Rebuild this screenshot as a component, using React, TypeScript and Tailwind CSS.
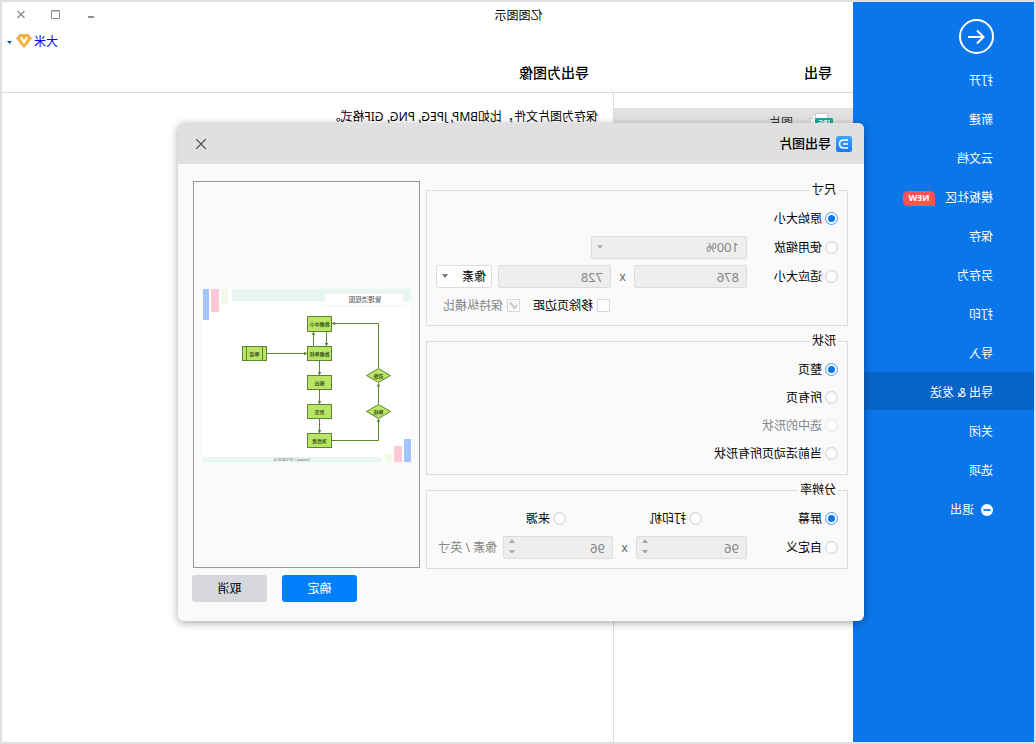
import type { ReactNode } from "react"
import { clsx } from "clsx"

interface MenuItem {
  label: string
  active?: boolean
  badge?: string
  exit?: boolean
}

const menu: MenuItem[] = [
  { label: "打开" },
  { label: "新建" },
  { label: "云文档" },
  { label: "模板社区", badge: "NEW" },
  { label: "保存" },
  { label: "另存为" },
  { label: "打印" },
  { label: "导入" },
  { label: "导出 & 发送", active: true },
  { label: "关闭" },
  { label: "选项" },
  { label: "退出", exit: true },
]

function Sidebar() {
  return (
    <nav className="w-[181px] shrink-0 bg-[#0a76ea] pt-[17px] text-white">
      <button type="button" aria-label="返回" className="ml-10 block size-[35px]">
        <svg viewBox="0 0 35 35" className="size-full" fill="none" stroke="currentColor" strokeWidth="2">
          <circle cx="17.5" cy="17.5" r="16.5" />
          <path d="M26 18H11M17 11.5L10.500 18l6.500 6.500" />
        </svg>
      </button>
      <ul className="mt-[6px] flex flex-col gap-px">
        {menu.map((item) => (
          <li key={item.label}>
            <a href="#" className={clsx("flex h-[38px] items-center pt-1 pl-[41px]", item.active && "bg-[#0865c8]")}>
              {item.exit && (
                <svg viewBox="0 0 12 12" className="mr-[7px] mb-px size-3">
                  <circle cx="6" cy="6" r="6" fill="#fff" />
                  <path d="M2.500 6h7" stroke="#0a76ea" strokeWidth="1.800" />
                </svg>
              )}
              <span>{item.label}</span>
              {item.badge && (
                <span className="ml-[10px] flex h-[15px] w-8 items-center justify-center rounded-[5px] rounded-bl-none bg-[#ff5254] font-['Open_Sans',sans-serif] text-[9px] font-bold">
                  {item.badge}
                </span>
              )}
            </a>
          </li>
        ))}
      </ul>
    </nav>
  )
}

function TitleBar() {
  return (
    <>
      <div className="relative flex h-7 items-center justify-center pr-[182px]">
        <h1>亿图图示</h1>
        <div className="absolute inset-y-0 right-3 flex items-center gap-[21px] pb-[2px] text-[#8f8f8f]">
          <button type="button" aria-label="最小化">
            <svg viewBox="0 0 14 14" className="size-[14px]">
              <path d="M4 8h6v2H4z" fill="currentColor" />
            </svg>
          </button>
          <button type="button" aria-label="最大化">
            <svg viewBox="0 0 14 14" className="size-[14px]" fill="none" stroke="currentColor">
              <path d="M3.500 3v7.500h8V2.500h-8M3 3h9" />
            </svg>
          </button>
          <button type="button" aria-label="关闭窗口">
            <svg viewBox="0 0 14 14" className="size-[14px]" fill="none" stroke="currentColor" strokeWidth="1.500">
              <path d="M3.500 3l7 7M10.500 3l-7 7" />
            </svg>
          </button>
        </div>
      </div>
      <div className="flex h-6 items-center justify-end pr-[5px]">
        <button type="button" className="flex items-center text-[#0000ff]">
          大米
          <svg viewBox="0 0 16 14" className="mb-[2px] ml-[2px] h-[14px] w-4">
            <path d="M3.500 0h9L16 4.500 8.700 13.600q-.7.800-1.400 0L0 4.500z" fill="#f3b24a" />
            <path d="M5.300 4L8 8.200 10.700 4" fill="none" stroke="#fff" strokeWidth="2" strokeLinecap="round" />
          </svg>
          <svg viewBox="0 0 5 3" className="ml-1 h-[3px] w-[5px]">
            <path d="M0 0h5L2.500 3z" fill="#0a56b0" />
          </svg>
        </button>
      </div>
    </>
  )
}

function Radio({ name, label, checked, disabled, className }: {
  name: string
  label: string
  checked?: boolean
  disabled?: boolean
  className?: string
}) {
  return (
    <label className={clsx("flex shrink-0 items-center gap-[3px]", disabled && "text-[#858585]", className)}>
      <input
        type="radio"
        name={name}
        defaultChecked={checked}
        disabled={disabled}
        className="size-[13px] appearance-none rounded-full border border-[#cfcfd2] bg-white bg-clip-content p-[2px] checked:border-[#4a98f2] checked:bg-[#0a76ea] disabled:border-[#e8e8ea]"
      />
      {label}
    </label>
  )
}

function Check({ label, checked, disabled }: { label: string; checked?: boolean; disabled?: boolean }) {
  return (
    <label className={clsx("flex items-center gap-1", disabled && "text-[#858585]")}>
      <span className="relative flex">
        <input
          type="checkbox"
          defaultChecked={checked}
          disabled={disabled}
          className="size-[13px] appearance-none border border-[#d8d8da] bg-white disabled:bg-[#fafafa]"
        />
        {checked && (
          <svg viewBox="0 0 13 13" className="absolute inset-0 size-[13px]" fill="none" stroke="#c9c9cb" strokeWidth="2">
            <path d="M3 6l2.500 3L10 3.500" />
          </svg>
        )}
      </span>
      {label}
    </label>
  )
}

function Select({ label, value, disabled, className }: {
  label: string
  value: string
  disabled?: boolean
  className?: string
}) {
  return (
    <span className={clsx("relative h-[23px]", className)}>
      <select
        aria-label={label}
        disabled={disabled}
        className="h-full w-full appearance-none rounded-[2px] border border-[#dcdce0] bg-white pl-[5px] disabled:bg-[#eee] disabled:pl-[7px] disabled:text-[13px] disabled:text-[#858585] disabled:opacity-100"
      >
        <option>{value}</option>
      </select>
      <svg viewBox="0 0 6 4" className={clsx("pointer-events-none absolute top-[9px] right-[6px] h-1 w-[6px]", disabled ? "text-[#aaa]" : "text-[#777]")}>
        <path d="M0 0h6L3 4z" fill="currentColor" />
      </svg>
    </span>
  )
}

function NumberBox({ label, value, stepper, className }: {
  label: string
  value: string
  stepper?: boolean
  className?: string
}) {
  return (
    <span className={clsx("relative h-[23px]", className)}>
      <input
        aria-label={label}
        defaultValue={value}
        disabled
        className="h-full w-full rounded-[2px] border border-[#dcdce0] bg-[#eee] pl-[7px] text-[13px] text-[#858585]"
      />
      {stepper && (
        <svg viewBox="0 0 6 14" className="absolute top-[3px] right-[6px] h-[14px] w-[6px]" fill="#a8a8a8">
          <path d="M0 4h6L3 0zM0 11h6l-3 4z" />
        </svg>
      )}
    </span>
  )
}

function Group({ title, className, children }: { title: string; className: string; children: ReactNode }) {
  return (
    <fieldset className="min-w-0 border border-[#dcdce0] pr-[9px] pl-[9px]">
      <legend className="px-[2px] leading-[18px]">{title}</legend>
      <div className={clsx("flex flex-col pt-2", className)}>{children}</div>
    </fieldset>
  )
}

function Row({ children }: { children: ReactNode }) {
  return <div className="flex h-[23px] items-center">{children}</div>
}

const boxes = [
  { y: 27.5, h: 15, text: "数据中小" },
  { y: 57.5, h: 14, text: "数据审核" },
  { y: 86.5, h: 14, text: "输出" },
  { y: 115.5, h: 14, text: "复查" },
  { y: 144.500, h: 14, text: "消费者" },
]

const diamonds = [
  { y: 86.5, text: "调整" },
  { y: 122.5, text: "审核" },
]

function Preview() {
  return (
    <svg viewBox="0 0 208 173" className="w-[208px]" role="img" aria-label="管理流程图">
      <defs>
        <marker id="arrow" viewBox="0 0 4 4" refX="3.500" refY="2" markerWidth="3.500" markerHeight="3.500" orient="auto">
          <path d="M0 0l4 2-4 2z" fill="#5f8430" />
        </marker>
      </defs>
      <rect width="208" height="173" fill="#fff" />
      <rect width="179" height="12" fill="#e8f6f0" />
      <rect x="183" width="7" height="16" fill="#f2f9e8" />
      <rect x="192" width="8" height="23" fill="#ffc8d5" />
      <rect x="202" width="6" height="31" fill="#a2c4ff" />
      <rect x="7.500" y="4.500" width="79" height="13" fill="#fff" stroke="#fdf0ea" />
      <rect x="29" y="168" width="179" height="5" fill="#e8f6f0" />
      <rect x="19" y="164" width="7" height="9" fill="#f2f9e8" />
      <rect x="9" y="157" width="8" height="16" fill="#ffc8d5" />
      <rect y="150" width="7" height="23" fill="#a2c4ff" />

      <g fill="none" stroke="#5f8430">
        <path d="M32.500 79V34.500H79" markerEnd="url(#arrow)" />
        <path d="M79 151.500H32.500V130" markerEnd="url(#arrow)" />
        <path d="M32.500 115V94.500" markerEnd="url(#arrow)" />
        <path d="M97.500 57V43" markerEnd="url(#arrow)" />
        <path d="M84.500 43V57" markerEnd="url(#arrow)" />
        <path d="M91.500 72V86" markerEnd="url(#arrow)" />
        <path d="M91.500 100V115" markerEnd="url(#arrow)" />
        <path d="M91.500 130V144" markerEnd="url(#arrow)" />
        <path d="M145 64.500H104" markerEnd="url(#arrow)" />
      </g>

      <g fill="#b9e566" stroke="#5f8430">
        {boxes.map((b) => (
          <rect key={b.text} x="79.500" y={b.y} width="24" height={b.h} />
        ))}
        {diamonds.map((d) => (
          <path key={d.text} d={`M20.500 ${d.y}l12-7 12 7-12 7z`} />
        ))}
        <rect x="144.500" y="57.500" width="24" height="14" />
        <path d="M148.500 57.500v14M164.500 57.500v14" />
      </g>

      <g fill="#2c4410" fontSize="5" fontWeight="500" textAnchor="middle">
        {boxes.map((b) => (
          <text key={b.text} x="91.500" y={b.y + 9}>{b.text}</text>
        ))}
        {diamonds.map((d) => (
          <text key={d.text} x="32.500" y={d.y + 2}>{d.text}</text>
        ))}
        <text x="156.500" y="66.500">审阅</text>
      </g>
      <text x="46" y="13" fontSize="6.500" fill="#555" textAnchor="middle">管理流程图</text>
      <text x="119" y="171.500" fontSize="3" fill="#555" textAnchor="middle">Company | 2019.08.26 14</text>
    </svg>
  )
}

function ExportDialog() {
  return (
    <div
      role="dialog"
      aria-label="导出图片"
      className="w-[686px] overflow-hidden rounded-md bg-[#fafafa] shadow-[0_2px_8px_rgba(0,0,0,0.35)]"
    >
      <header className="flex h-[41px] items-center bg-[#e0e0e0] pr-[18px] pl-3">
        <svg viewBox="0 0 16 16" className="size-4">
          <defs>
            <linearGradient id="logo" x1="0" y1="0" x2="0" y2="1">
              <stop offset="0" stopColor="#3fa5ff" />
              <stop offset="1" stopColor="#1a78f5" />
            </linearGradient>
          </defs>
          <rect width="16" height="16" rx="2.500" fill="url(#logo)" />
          <path d="M4 4h4.500a4 4 0 010 8H4M4 8h5" fill="none" stroke="#fff" strokeWidth="1.700" />
        </svg>
        <h2 className="ml-[5px] text-[13px] font-medium">导出图片</h2>
        <button type="button" aria-label="关闭" className="ml-auto">
          <svg viewBox="0 0 10 10" className="size-[10px]" fill="none" stroke="#444" strokeWidth="1.200">
            <path d="M0 0l10 10M10 0L0 10" />
          </svg>
        </button>
      </header>

      <div className="flex gap-[6px] pt-[17px] pr-[15px] pl-4">
        <div className="flex flex-1 flex-col gap-[6px]">
          <Group title="尺寸" className="gap-[6px] pb-2">
            <Row>
              <Radio name="size" label="原始大小" checked />
            </Row>
            <Row>
              <Radio name="size" label="使用缩放" className="w-[91px]" />
              <Select label="缩放" value="100%" disabled className="w-[156px]" />
            </Row>
            <Row>
              <Radio name="size" label="适应大小" className="w-[91px]" />
              <NumberBox label="宽度" value="876" className="w-[113px]" />
              <span className="w-[23px] text-center text-[#666]">x</span>
              <NumberBox label="高度" value="728" className="w-[113px]" />
              <Select label="单位" value="像素" className="ml-[6px] w-14" />
            </Row>
            <div className="flex h-[23px] items-center gap-[13px] pl-[228px]">
              <Check label="移除页边距" />
              <Check label="保持纵横比" checked disabled />
            </div>
          </Group>

          <Group title="形状" className="gap-[5px] pb-[9px]">
            <Row><Radio name="shape" label="整页" checked /></Row>
            <Row><Radio name="shape" label="所有页" /></Row>
            <Row><Radio name="shape" label="选中的形状" disabled /></Row>
            <Row><Radio name="shape" label="当前活动页所有形状" /></Row>
          </Group>

          <Group title="分辨率" className="gap-[6px] pb-[9px]">
            <Row>
              <Radio name="dpi" label="屏幕" checked className="w-[136px]" />
              <Radio name="dpi" label="打印机" className="w-[136px]" />
              <Radio name="dpi" label="来源" />
            </Row>
            <Row>
              <Radio name="dpi" label="自定义" className="w-[91px]" />
              <NumberBox label="水平分辨率" value="96" stepper className="w-[111px]" />
              <span className="w-[23px] text-center text-[#666]">x</span>
              <NumberBox label="垂直分辨率" value="96" stepper className="w-[110px]" />
              <span className="ml-[6px] text-[#858585]">像素 / 英寸</span>
            </Row>
          </Group>
        </div>

        <div className="mb-px flex w-[227px] items-center border border-[#979797] pt-px pl-2">
          <Preview />
        </div>
      </div>

      <footer className="flex justify-end gap-[15px] pt-[6px] pr-[14px] pb-[19px]">
        <button type="button" className="h-[27px] w-[75px] rounded-[3px] bg-[#0080ff] text-white">确定</button>
        <button type="button" className="h-[27px] w-[75px] rounded-[3px] bg-[#d5d7db]">取消</button>
      </footer>
    </div>
  )
}

export default function App() {
  return (
    // the whole window is shown mirrored left to right
    <div className="relative flex min-h-screen -scale-x-100 border-2 border-[#e0e0e0] bg-white font-['Noto_Sans','Noto_Sans_CJK_SC',sans-serif] text-xs text-black">
      <Sidebar />

      <main className="flex flex-1 flex-col">
        <TitleBar />
        <div className="flex h-[39px] items-center border-b border-[#dcdcdc] text-sm font-medium">
          <h2 className="w-60 pl-[21px]">导出</h2>
          <h2 className="pl-6">导出为图像</h2>
        </div>
        <div className="flex flex-1">
          <div className="w-60 border-r border-[#dcdcdc] pt-[15px]">
            <a href="#" className="flex h-[39px] items-start bg-[#e0e0e0] pt-[5px] pl-5 text-[#333]">
              <svg viewBox="0 0 24 24" className="size-6">
                <path d="M5.500 .5h12l5 5v18h-17z" fill="#fff" stroke="#ccc" />
                <path d="M17.500 .5v5h5" fill="none" stroke="#ccc" />
                <rect y="5" width="18" height="9" rx="1.500" fill="#12ab9b" />
                <text x="9" y="12" fontSize="7" fontWeight="700" fill="#fff" textAnchor="middle">JPG</text>
              </svg>
              <span className="ml-4 leading-5">图片</span>
            </a>
          </div>
          <p className="pt-[14px] pl-[15px] leading-5">保存为图片文件，比如BMP, JPEG, PNG, GIF格式。</p>
        </div>
      </main>

      <div className="absolute inset-0 flex items-center justify-center pr-[6px]">
        <ExportDialog />
      </div>
    </div>
  )
}
